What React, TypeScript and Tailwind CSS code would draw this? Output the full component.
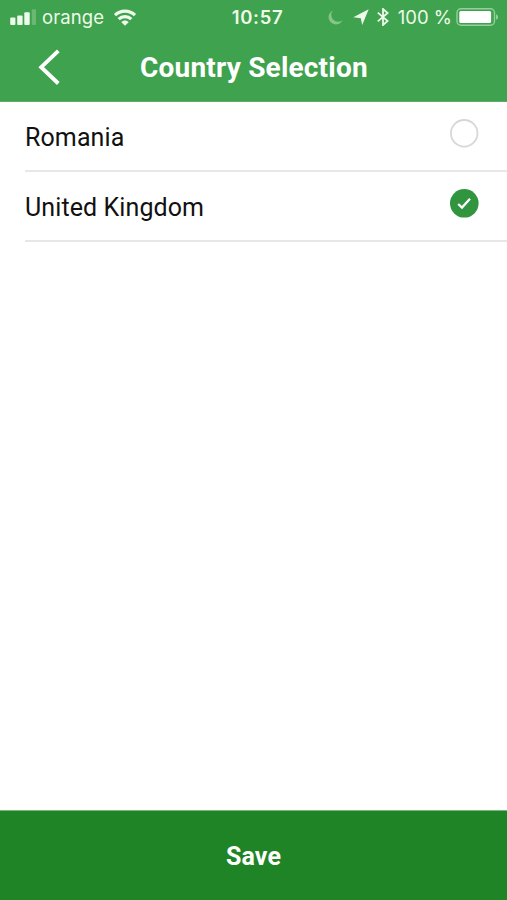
import React, { useState } from "react";

function StatusBar() {
  return (
    <div className="flex h-[34px] items-center font-['Inter',sans-serif] text-[#eefbea]">
      <div className="flex flex-1 items-center pl-[10px]">
        <svg width="26" height="16" viewBox="0 0 26 16" fill="currentColor">
          <rect x="0.2" y="8.6" width="5.2" height="7.4" rx="1" />
          <rect x="7.2" y="6.4" width="5.4" height="9.6" rx="1" />
          <rect x="14.3" y="3.3" width="5.4" height="12.7" rx="1" />
          <rect x="21.8" y="0.3" width="4.2" height="15.7" rx="1" opacity="0.25" />
        </svg>
        <span className="ml-[6px] w-[71px] text-[18.5px] leading-[34px] tracking-[0.1px]">orange</span>
        <svg width="24" height="17" viewBox="0 0 24 17" fill="none" stroke="currentColor" strokeWidth="3.2">
          <path d="M2 6.2C7.5 0.7 16.5 0.7 22 6.2" />
          <path d="M5.7 10.2C9.2 6.7 14.8 6.7 18.3 10.2" />
          <path d="M12 16.8L8.2 13C10.3 10.9 13.7 10.9 15.8 13Z" fill="currentColor" stroke="none" />
        </svg>
      </div>
      <span className="pl-[6px] text-[18.5px] leading-[34px] font-semibold tracking-[0.7px]">10:57</span>
      <div className="flex flex-1 items-center justify-end pr-[8px]">
        <svg className="mr-[10px]" width="15" height="15" viewBox="0 0 15 15" fill="currentColor" opacity="0.4">
          <path d="M4.8 0.5A7.3 7.3 0 1 0 14.5 10.2A6.9 6.9 0 0 1 4.8 0.5Z" />
        </svg>
        <svg className="mr-[8px]" width="16" height="16" viewBox="0 0 16 16" fill="currentColor">
          <path d="M15.7 0.3L9.2 16L7.8 9.3L0.3 8.2Z" />
        </svg>
        <svg className="mr-[9px]" width="12" height="18" viewBox="0 0 12 18" fill="none" stroke="currentColor" strokeWidth="1.8">
          <path d="M0.8 4.6L10.6 13L6 17V1L10.6 5L0.8 13.4" />
        </svg>
        <span className="text-[18.5px] leading-[34px] whitespace-nowrap">100 %</span>
        <svg className="ml-[4px]" width="43" height="18" viewBox="0 0 43 18">
          <rect x="1" y="0.8" width="37.5" height="16.4" rx="4" fill="none" stroke="currentColor" strokeWidth="1.4" opacity="0.5" />
          <rect x="3.3" y="3" width="31.8" height="12" rx="1.5" fill="#fff" />
          <path d="M40 6.2C42.8 7.3 42.8 10.7 40 11.8Z" fill="currentColor" opacity="0.5" />
        </svg>
      </div>
    </div>
  );
}

function Header() {
  return (
    <header className="h-[102px] border-b border-[#5bae69] bg-[#3fa24e]">
      <StatusBar />
      <div className="flex h-[66px] items-center pl-[38px]">
        <button aria-label="Back" className="w-[102px]">
          <svg width="22" height="36" viewBox="0 0 22 36" fill="none" stroke="#fff" strokeWidth="3.9">
            <path d="M20.3 1.8L3.2 18.2L20.3 34.5" />
          </svg>
        </button>
        <h1 className="pt-[2px] text-[28px] leading-[66px] font-bold tracking-[0.2px] whitespace-nowrap text-white">Country Selection</h1>
      </div>
    </header>
  );
}

function CountryRow({ name, selected, onSelect }: { name: string; selected: boolean; onSelect: () => void }) {
  return (
    <li
      onClick={onSelect}
      className="ml-[25px] flex h-[70px] cursor-pointer items-start justify-between border-b-2 border-[#e7e7e8] pr-[28px]"
    >
      <span className="pt-px text-[25px] leading-[70px] tracking-[0.1px] text-[#111]">{name}</span>
      <svg className="mt-[17px]" width="29" height="29" viewBox="0 0 29 29" fill="none">
        {selected ? (
          <>
            <circle cx="14.3" cy="14.3" r="14.3" fill="#319540" />
            <path d="M8.2 15L12 18.6L20 9.7" stroke="#fff" strokeWidth="2.3" />
          </>
        ) : (
          <circle cx="14.2" cy="14.3" r="13.3" stroke="#d7d7d9" strokeWidth="1.8" />
        )}
      </svg>
    </li>
  );
}

export default function App() {
  const [country, setCountry] = useState("United Kingdom");
  return (
    <div className="flex h-[900px] w-[507px] flex-col bg-white font-['Roboto',sans-serif]">
      <Header />
      <ul className="flex-1">
        {["Romania", "United Kingdom"].map((name) => (
          <CountryRow key={name} name={name} selected={name === country} onSelect={() => setCountry(name)} />
        ))}
      </ul>
      <button className="h-[90px] border-t border-[#78b77b] bg-[#1f8425] pt-[2px] text-[25px] font-bold tracking-[0.1px] text-white">
        Save
      </button>
    </div>
  );
}
